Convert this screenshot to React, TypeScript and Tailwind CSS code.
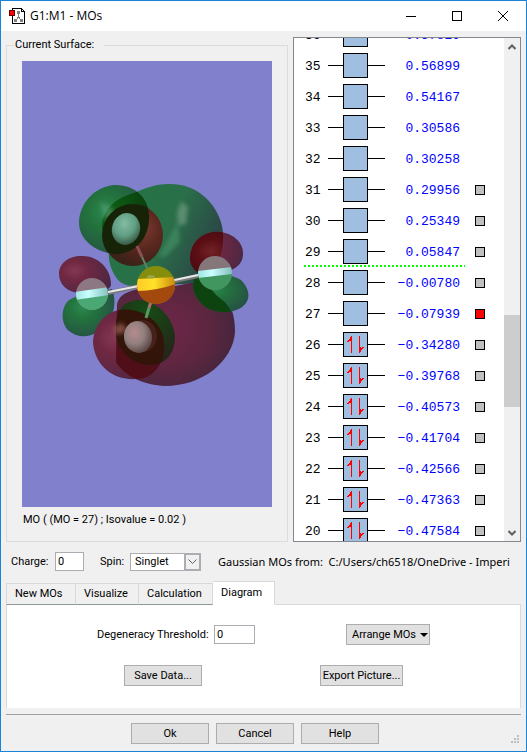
import React, { useState } from 'react';

interface Orbital {
    id: number;
    energy: string;
    occupied: boolean;
    marker?: 'grey' | 'red';
}

const orbitals: Orbital[] = [
    { id: 36, energy: '0.57829', occupied: false },
    { id: 35, energy: '0.56899', occupied: false },
    { id: 34, energy: '0.54167', occupied: false },
    { id: 33, energy: '0.30586', occupied: false },
    { id: 32, energy: '0.30258', occupied: false },
    { id: 31, energy: '0.29956', occupied: false, marker: 'grey' },
    { id: 30, energy: '0.25349', occupied: false, marker: 'grey' },
    { id: 29, energy: '0.05847', occupied: false, marker: 'grey' },
    { id: 28, energy: '−0.00780', occupied: false, marker: 'grey' },
    { id: 27, energy: '−0.07939', occupied: false, marker: 'red' },
    { id: 26, energy: '−0.34280', occupied: true, marker: 'grey' },
    { id: 25, energy: '−0.39768', occupied: true, marker: 'grey' },
    { id: 24, energy: '−0.40573', occupied: true, marker: 'grey' },
    { id: 23, energy: '−0.41704', occupied: true, marker: 'grey' },
    { id: 22, energy: '−0.42566', occupied: true, marker: 'grey' },
    { id: 21, energy: '−0.47363', occupied: true, marker: 'grey' },
    { id: 20, energy: '−0.47584', occupied: true, marker: 'grey' },
];

const tabs = [
    { name: 'New MOs', width: 'w-[70px]' },
    { name: 'Visualize', width: 'w-[63px]' },
    { name: 'Calculation', width: 'w-[74px]' },
    { name: 'Diagram', width: 'w-[62px]' },
];

const AppIcon = () => (
    <svg width="16" height="16" viewBox="0 0 16 16" shapeRendering="crispEdges" aria-hidden="true">
        <path d="M3.5 .5h9l3 3v12h-12z" fill="#fff" stroke="#000" />
        <path d="M12 0h1v3h3v1h-4z" fill="#000" />
        <path d="M8 3h3v3H8zM5 11h3v3H5zM11 11h3v3h-3zM9 5h1v5H9zM8 9h1v2H8zM10 9h1v2h-1z" fill="#808080" />
        <path d="M.5 2.5h5v5h-5z" fill="#f00" stroke="#600" />
    </svg>
);

const TitleBar = () => (
    <header className="flex h-[30px] shrink-0 items-center bg-white pl-2">
        <AppIcon />
        <h1 className="ml-[5px] flex-1 font-['Open_Sans',sans-serif] text-xs">G1:M1 - MOs</h1>
        <button type="button" aria-label="Minimize" className="flex h-full w-[46px] items-center justify-center">
            <svg width="10" height="10" shapeRendering="crispEdges"><path d="M0 5.5h10" stroke="#000" /></svg>
        </button>
        <button type="button" aria-label="Maximize" className="flex h-full w-[46px] items-center justify-center">
            <svg width="10" height="10" shapeRendering="crispEdges"><path d="M.5 .5h9v9h-9z" fill="none" stroke="#000" /></svg>
        </button>
        <button type="button" aria-label="Close" className="flex h-full w-[46px] items-center justify-center">
            <svg width="10" height="10"><path d="M0 0l10 10M10 0L0 10" stroke="#000" /></svg>
        </button>
    </header>
);

const Molecule = () => (
    <svg className="h-full w-full" viewBox="22 61 250 446" role="img" aria-label="Orbital surface">
        <defs>
            <linearGradient id="bigGreen" x1="0" y1="0.2" x2="1" y2="0.6">
                <stop offset="0" stopColor="#237544" />
                <stop offset="0.55" stopColor="#2a6f48" />
                <stop offset="1" stopColor="#2b4147" />
            </linearGradient>
            <radialGradient id="bigRed" cx="0.4" cy="0.45" r="0.65">
                <stop offset="0" stopColor="#70264a" />
                <stop offset="0.6" stopColor="#5c263f" />
                <stop offset="1" stopColor="#42263d" />
            </radialGradient>
            <radialGradient id="green" cx="0.38" cy="0.38" r="0.7">
                <stop offset="0" stopColor="#2c8850" />
                <stop offset="0.35" stopColor="#23733d" />
                <stop offset="1" stopColor="#264f45" />
            </radialGradient>
            <radialGradient id="red" cx="0.3" cy="0.4" r="0.8">
                <stop offset="0" stopColor="#843852" />
                <stop offset="0.3" stopColor="#702842" />
                <stop offset="1" stopColor="#482743" />
            </radialGradient>
            <radialGradient id="brown" cx="0.65" cy="0.4" r="0.6">
                <stop offset="0" stopColor="#7d3c33" />
                <stop offset="0.5" stopColor="#5b281f" />
                <stop offset="1" stopColor="#3c2119" />
            </radialGradient>
            <radialGradient id="darkGreen" cx="0.35" cy="0.35" r="0.7">
                <stop offset="0" stopColor="#0d6517" />
                <stop offset="1" stopColor="#093c0c" />
            </radialGradient>
            <radialGradient id="lowGreen" cx="0.5" cy="0.2" r="0.8">
                <stop offset="0" stopColor="#154d15" />
                <stop offset="1" stopColor="#262319" />
            </radialGradient>
            <radialGradient id="darkRed" cx="0.4" cy="0.45" r="0.7">
                <stop offset="0" stopColor="#712427" />
                <stop offset="0.4" stopColor="#5b0e14" />
                <stop offset="1" stopColor="#380c12" />
            </radialGradient>
            <radialGradient id="tealAtom" cx="0.4" cy="0.35" r="0.65">
                <stop offset="0" stopColor="#81bba3" />
                <stop offset="0.6" stopColor="#609e82" />
                <stop offset="1" stopColor="#3b5e4b" />
            </radialGradient>
            <radialGradient id="greyAtom" cx="0.4" cy="0.35" r="0.7">
                <stop offset="0" stopColor="#b78b8d" />
                <stop offset="0.5" stopColor="#92807f" />
                <stop offset="1" stopColor="#54413e" />
            </radialGradient>
            <linearGradient id="yellowBand">
                <stop offset="0" stopColor="#ffc928" />
                <stop offset="0.45" stopColor="#ffe229" />
                <stop offset="1" stopColor="#c9860c" />
            </linearGradient>
            <linearGradient id="paleBand">
                <stop offset="0" stopColor="#9de5e2" />
                <stop offset="0.4" stopColor="#caffff" />
                <stop offset="1" stopColor="#84bebd" />
            </linearGradient>
            <filter id="soft" x="-50%" y="-50%" width="200%" height="200%"><feGaussianBlur stdDeviation="2" /></filter>
            <path id="bigGreenShape" d="M168 184C187 183 203 192 213 206C220 216 224 228 223 240C223 257 214 273 202 283L140 286C130 287 123 285 118 280C110 270 108 259 109 250L102 227C102 210 115 198 134 193C145 188 156 184 168 184Z" />
            <path id="bigRedShape" d="M155 290L190 283C206 282 224 293 230 306C234 314 235 323 235 332C233 361 203 386 165 386C145 385 125 377 116 362L117 305C119 293 130 290 155 286Z" />
            <path id="upperGreenShape" d="M114 185C135 184 150 199 149 218C149 241 132 255 114 254C93 251 79 239 79 222C80 203 94 187 114 185Z" />
            <path id="lowerRedShape" d="M119 310C139 307 162 319 164 342C166 360 155 379 137 379C111 381 94 363 93 342C94 326 104 313 119 310Z" />
            <path id="lowerGreenShape" d="M137 300C156 300 174 317 175 337C175 354 165 365 150 365C131 364 117 350 116 333C115 312 121 302 137 300Z" />
            <path id="rightRedShape" d="M213 232C229 230 244 241 243 254C243 267 231 272 212 275C198 278 189 266 190 257C191 243 200 234 213 232Z" />
            <path id="rightGreenShape" d="M201 275C216 273 231 274 241 280C248 287 251 296 246 303C239 313 220 315 207 308C195 300 191 288 194 279Z" />
            <clipPath id="inBigGreen"><use href="#bigGreenShape" /></clipPath>
            <clipPath id="inBigRed"><use href="#bigRedShape" /></clipPath>
            <clipPath id="inUpperGreen"><use href="#upperGreenShape" /></clipPath>
            <clipPath id="inLowerRed"><use href="#lowerRedShape" /></clipPath>
            <clipPath id="inRightGreen"><use href="#rightGreenShape" /></clipPath>
            <clipPath id="inYellow"><circle cx="156" cy="285" r="19" /></clipPath>
            <clipPath id="inLeftAtom"><circle cx="92" cy="294" r="16" /></clipPath>
            <clipPath id="inRightAtom"><circle cx="215" cy="273" r="17" /></clipPath>
        </defs>

        {/* large lobes */}
        <use href="#bigGreenShape" fill="url(#bigGreen)" />
        <g clipPath="url(#inBigGreen)">
            <path d="M181 201L188 207L186 224L178 226L177 214Z" fill="#83ac91" opacity=".55" filter="url(#soft)" />
            <path d="M172 232L178 222L180 242L166 256L158 257Z" fill="#448f66" opacity=".7" filter="url(#soft)" />
        </g>
        <use href="#bigRedShape" fill="url(#bigRed)" />

        {/* upper pair */}
        <use href="#upperGreenShape" fill="url(#green)" />
        <g clipPath="url(#inBigGreen)"><use href="#upperGreenShape" fill="url(#darkGreen)" /></g>
        <path d="M100 202L111 207L118 216L105 220Z" fill="#64a680" opacity=".5" filter="url(#soft)" />
        <ellipse cx="133" cy="235" rx="30" ry="31" fill="url(#brown)" />
        <g clipPath="url(#inUpperGreen)"><ellipse cx="133" cy="235" rx="31" ry="31" fill="#162306" /></g>
        <ellipse cx="126" cy="229" rx="14" ry="16" fill="url(#tealAtom)" transform="rotate(15 126 229)" />
        <path d="M137 246L142 257" stroke="#8c4f57" strokeWidth="3" />
        <path d="M142 257L148 270" stroke="#5f8361" strokeWidth="2" />

        {/* left atom */}
        <path d="M81 256C97 255 111 268 111 284C111 292 96 293 79 293C67 292 59 284 59 274C59 263 69 256 81 256Z" fill="url(#red)" />
        <path d="M75 297L112 289C117 302 114 316 106 325C96 337 80 340 69 331C60 323 61 307 69 300Z" fill="url(#green)" />
        <g clipPath="url(#inLeftAtom)">
            <path d="M75 277h34v34H75z" fill="#8d7782" />
            <path d="M75 299L109 293V311H75Z" fill="#49a873" />
            <path d="M75 292L109 287V295L75 300Z" fill="url(#paleBand)" />
        </g>

        {/* right atom */}
        <use href="#rightRedShape" fill="url(#red)" />
        <g clipPath="url(#inBigGreen)"><use href="#rightRedShape" fill="url(#darkRed)" /></g>
        <use href="#rightGreenShape" fill="url(#green)" />
        <path clipPath="url(#inRightGreen)" d="M185 270L203 276Q210 291 221 299Q229 305 232 314L185 318Z" fill="#0c430f" />
        <g clipPath="url(#inRightAtom)">
            <path d="M198 256h34v34h-34z" fill="#857679" />
            <path d="M198 276L232 273V290H198Z" fill="#40965e" />
            <path d="M198 271L232 267V274L198 278Z" fill="url(#paleBand)" />
        </g>

        {/* lower pair */}
        <use href="#lowerRedShape" fill="url(#red)" />
        <g clipPath="url(#inBigRed)"><use href="#lowerRedShape" fill="#500e19" /></g>
        <use href="#lowerGreenShape" fill="url(#lowGreen)" />
        <g clipPath="url(#inLowerRed)"><use href="#lowerGreenShape" fill="#321508" /></g>
        <path d="M113 327L122 323L128 331L116 335Z" fill="#9d625a" opacity=".7" filter="url(#soft)" />
        <ellipse cx="143" cy="336" rx="14" ry="16" fill="#45211a" />
        <ellipse cx="138" cy="337" rx="14" ry="16" fill="url(#greyAtom)" transform="rotate(-10 138 337)" />
        <path d="M152 298L149 308" stroke="#ad6e76" strokeWidth="3" />
        <path d="M149 308L146 318" stroke="#5c9562" strokeWidth="3" />

        {/* bonds and centre */}
        <path d="M108 293L139 286M170 282L198 276" stroke="#777" strokeWidth="4" />
        <path d="M108 292L139 286M170 281L198 275" stroke="#e8e8e8" strokeWidth="2" />
        <g clipPath="url(#inYellow)">
            <path d="M136 265h40v40h-40z" fill="#858d0d" />
            <path d="M136 286L176 283V306H136Z" fill="#a4490e" />
            <path d="M136 279L176 277V284Q157 291 136 291Z" fill="url(#yellowBand)" />
        </g>
        <ellipse cx="151" cy="277" rx="4" ry="2" fill="#a9ad56" opacity=".7" />
    </svg>
);

const OrbitalRow = ({ orbital }: { orbital: Orbital }) => (
    <li className="relative flex h-[31px] shrink-0 items-center pl-[11px]">
        <span className="w-[23px] pt-0.5">{orbital.id}</span>
        <span className="h-px w-[15px] bg-black" />
        <span className="flex h-[25px] w-[25px] items-center justify-center border border-black bg-[#a0bee0]">
            {orbital.occupied && (
                <svg width="17" height="17" viewBox="0 0 17 17" shapeRendering="crispEdges" aria-hidden="true">
                    <path d="M4 0h1v17H4V5H2v1H0V5h1V4h1V3h1V1h1z" fill="#f00" />
                    <path d="M12 0h1v11h1v1h1v-1h2v1h-1v1h-1v1h-1v2h-1v1h-1z" fill="#f00" />
                </svg>
            )}
        </span>
        <span className="h-px w-[17px] bg-black" />
        <span className="w-[75px] pt-0.5 text-right text-[#0000ff]">{orbital.energy}</span>
        {orbital.marker && (
            <button
                type="button"
                aria-label={`Surface ${orbital.id}`}
                className={`ml-[15px] h-2.5 w-2.5 border border-black ${orbital.marker === 'red' ? 'bg-[#ff0000]' : 'bg-[#c0c0c0]'}`}
            />
        )}
        {orbital.id === 28 && (
            <span className="absolute -top-0.5 left-2.5 h-0.5 w-[161px] bg-[repeating-linear-gradient(90deg,#00ff00_0_2px,transparent_2px_4px)]" />
        )}
    </li>
);

const OrbitalList = () => (
    <section aria-label="Orbitals" className="flex w-[228px] shrink-0 overflow-hidden border border-[#828790] bg-white">
        <ul className="mt-[-19px] flex min-w-0 flex-1 flex-col font-['Liberation_Mono',monospace] text-[13px]">
            {orbitals.map(orbital => (
                <OrbitalRow key={orbital.id} orbital={orbital} />
            ))}
        </ul>
        <div className="flex w-4 flex-col items-center bg-[#f0f0f0]">
            <button type="button" aria-label="Scroll up" className="flex h-[17px] w-full items-center justify-center">
                <svg width="8" height="6"><path d="M.5 5L4 1.5L7.5 5" fill="none" stroke="#606060" strokeWidth="2" /></svg>
            </button>
            <div className="flex w-full flex-1 flex-col">
                <div className="grow-[260]" />
                <div className="grow-[92] bg-[#cdcdcd]" />
                <div className="grow-[117]" />
            </div>
            <button type="button" aria-label="Scroll down" className="flex h-[17px] w-full items-center justify-center">
                <svg width="8" height="6"><path d="M.5 1L4 4.5L7.5 1" fill="none" stroke="#606060" strokeWidth="2" /></svg>
            </button>
        </div>
    </section>
);

const buttonClass = 'border border-[#adadad] bg-[#e1e1e1] h-[21px] leading-none';

const App: React.FC = () => {
    const [activeTab, setActiveTab] = useState('Diagram');
    const [charge, setCharge] = useState('0');
    const [threshold, setThreshold] = useState('0');

    return (
        <div className="flex h-screen flex-col border border-[#1883d7] bg-[#f0f0f0] font-['Roboto',Arial,sans-serif] text-[11px] leading-4 text-black">
            <TitleBar />

            {/* Surface view and orbital energies */}
            <div className="flex min-h-0 flex-1 gap-[5px] px-[5px] pt-1.5">
                <fieldset className="flex min-w-0 flex-1 flex-col border border-[#dcdcdc] px-[15px] pb-[13px]">
                    <legend className="-ml-2 h-4 pr-2.5 pl-px">Current Surface:</legend>
                    <div className="mt-2 min-h-0 flex-1 bg-[#8080cc]">
                        <Molecule />
                    </div>
                    <p className="mt-[5px] pl-px">MO ( (MO = 27) ; Isovalue = 0.02 )</p>
                </fieldset>
                <OrbitalList />
            </div>

            {/* Charge and spin */}
            <div className="flex shrink-0 items-center px-2.5 py-2.5 whitespace-nowrap">
                <label htmlFor="charge" className="w-11">Charge:</label>
                <input
                    id="charge"
                    type="text"
                    value={charge}
                    onChange={e => setCharge(e.target.value)}
                    className="h-[19px] w-[29px] border border-[#abadb3] bg-white px-0.5"
                />
                <label htmlFor="spin" className="ml-4 w-[30px]">Spin:</label>
                <div className="relative flex">
                    <select id="spin" className="h-[18px] w-[71px] appearance-none border border-[#abadb3] bg-white pl-1 leading-none">
                        <option>Singlet</option>
                        <option>Triplet</option>
                    </select>
                    <span className="pointer-events-none absolute inset-y-0 right-0 flex w-[17px] items-center justify-center border-2 border-[#abadb3] bg-[#f0f0f0]">
                        <svg width="9" height="6"><path d="M.5 .5L4.5 4.5L8.5 .5" fill="none" stroke="#606060" /></svg>
                    </span>
                </div>
                <p className="ml-[17px] flex-1 font-['Noto_Sans',sans-serif] whitespace-pre">Gaussian MOs from:  C:/Users/ch6518/OneDrive - Imperi</p>
            </div>

            {/* Tabs */}
            <div className="flex shrink-0 items-end px-[5px]" role="tablist">
                {tabs.map(tab => (
                    <button
                        key={tab.name}
                        type="button"
                        role="tab"
                        aria-selected={tab.name === activeTab}
                        onClick={() => setActiveTab(tab.name)}
                        className={`border-t border-r border-[#d9d9d9] pl-2 text-left first:border-l ${tab.width} ${tab.name === activeTab ? 'h-6 border-b border-b-white bg-white' : 'h-[22px] border-b border-b-[#8e9995]'}`}
                    >
                        {tab.name}
                    </button>
                ))}
                <div className="flex-1 border-b border-[#d9d9d9]" />
            </div>
            <div className="mx-[5px] flex h-[103px] shrink-0 flex-col gap-5 border-x border-[#d9d9d9] bg-white pt-[19px]" role="tabpanel">
                <div className="flex items-center justify-between px-[90px]">
                    <div className="flex items-center">
                        <label htmlFor="threshold" className="w-[117px]">Degeneracy Threshold:</label>
                        <input
                            id="threshold"
                            type="text"
                            value={threshold}
                            onChange={e => setThreshold(e.target.value)}
                            className="h-[19px] w-[41px] border border-[#abadb3] bg-white px-0.5"
                        />
                    </div>
                    <button type="button" className={`${buttonClass} flex w-[84px] items-center justify-center gap-1 pl-1`}>
                        Arrange MOs
                        <svg width="8" height="4" aria-hidden="true"><path d="M0 0h8L4 4z" fill="#000" /></svg>
                    </button>
                </div>
                <div className="flex items-center justify-between px-[117px]">
                    <button type="button" className={`${buttonClass} w-[78px]`}>Save Data...</button>
                    <button type="button" className={`${buttonClass} w-[83px] whitespace-nowrap`}>Export Picture...</button>
                </div>
            </div>

            {/* Dialog buttons */}
            <footer className="relative mx-[5px] mt-1.5 flex shrink-0 justify-center gap-[7px] border-t border-[#a0a0a0] pt-2 pb-[7px] pr-[17px]">
                <button type="button" className={`${buttonClass} w-[78px]`}>Ok</button>
                <button type="button" className={`${buttonClass} w-[78px]`}>Cancel</button>
                <button type="button" className={`${buttonClass} w-[78px]`}>Help</button>
                <svg className="absolute right-0.5 bottom-2" width="8" height="8" shapeRendering="crispEdges" aria-hidden="true">
                    <path d="M6 0h2v2H6zM3 3h2v2H3zM6 3h2v2H6zM0 6h2v2H0zM3 6h2v2H3zM6 6h2v2H6z" fill="#bfbfbf" />
                </svg>
            </footer>
        </div>
    );
};

export default App;
